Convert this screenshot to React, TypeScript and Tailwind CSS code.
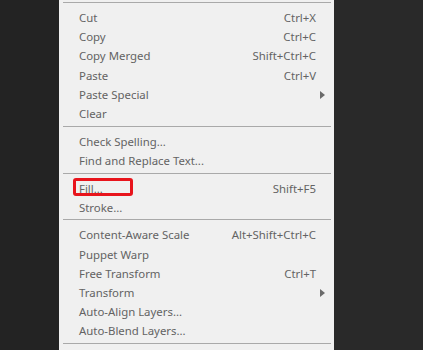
type Item = { label: string; shortcut?: string; submenu?: boolean; highlight?: boolean };

const groups: Item[][] = [
  [
    { label: 'Cut', shortcut: 'Ctrl+X' },
    { label: 'Copy', shortcut: 'Ctrl+C' },
    { label: 'Copy Merged', shortcut: 'Shift+Ctrl+C' },
    { label: 'Paste', shortcut: 'Ctrl+V' },
    { label: 'Paste Special', submenu: true },
    { label: 'Clear' },
  ],
  [{ label: 'Check Spelling...' }, { label: 'Find and Replace Text...' }],
  [{ label: 'Fill...', shortcut: 'Shift+F5', highlight: true }, { label: 'Stroke...' }],
  [
    { label: 'Content-Aware Scale', shortcut: 'Alt+Shift+Ctrl+C' },
    { label: 'Puppet Warp' },
    { label: 'Free Transform', shortcut: 'Ctrl+T' },
    { label: 'Transform', submenu: true },
    { label: 'Auto-Align Layers...' },
    { label: 'Auto-Blend Layers...' },
  ],
];

function Separator() {
  return (
    <div className="pt-[2.5px] pb-[5px] pl-[4px] pr-[3px]">
      <div className="h-px bg-[#a9a9a9]" />
    </div>
  );
}

function Row({ item }: { item: Item }) {
  return (
    <div className="relative flex h-[19.2px] items-center pl-[20px] pr-[18px]">
      <span className="flex-1">{item.label}</span>
      {item.shortcut && <span>{item.shortcut}</span>}
      {item.submenu && (
        <svg className="absolute right-[9px] top-[6px]" width="5" height="8" viewBox="0 0 5 8">
          <path d="M0 0 L5 4 L0 8 Z" fill="#6a6a6a" />
        </svg>
      )}
      {item.highlight && (
        <div className="absolute left-[14px] top-[-1px] h-[18px] w-[60px] rounded-[3px] border-[3px] border-[#e8141c]" />
      )}
    </div>
  );
}

export default function App() {
  return (
    <div className="flex h-[350px] w-[423px] overflow-hidden bg-[#272727]">
      <div className="w-[59px] bg-[#232323]" />
      <div
        className="w-[275px] bg-[#f0f0f0] pt-[2px] text-[11.4px] text-[#636363]"
        style={{ fontFamily: '"Noto Sans", "Segoe UI", sans-serif' }}
      >
        <div className="pl-[4px] pr-[3px]">
          <div className="h-px bg-[#a9a9a9]" />
        </div>
        <div className="h-[5px]" />
        {groups.map((g, gi) => (
          <div key={gi}>
            {gi > 0 && <Separator />}
            {g.map((item) => (
              <Row key={item.label} item={item} />
            ))}
          </div>
        ))}
        <Separator />
      </div>
      <div className="flex-1 bg-[#292929]" />
    </div>
  );
}
